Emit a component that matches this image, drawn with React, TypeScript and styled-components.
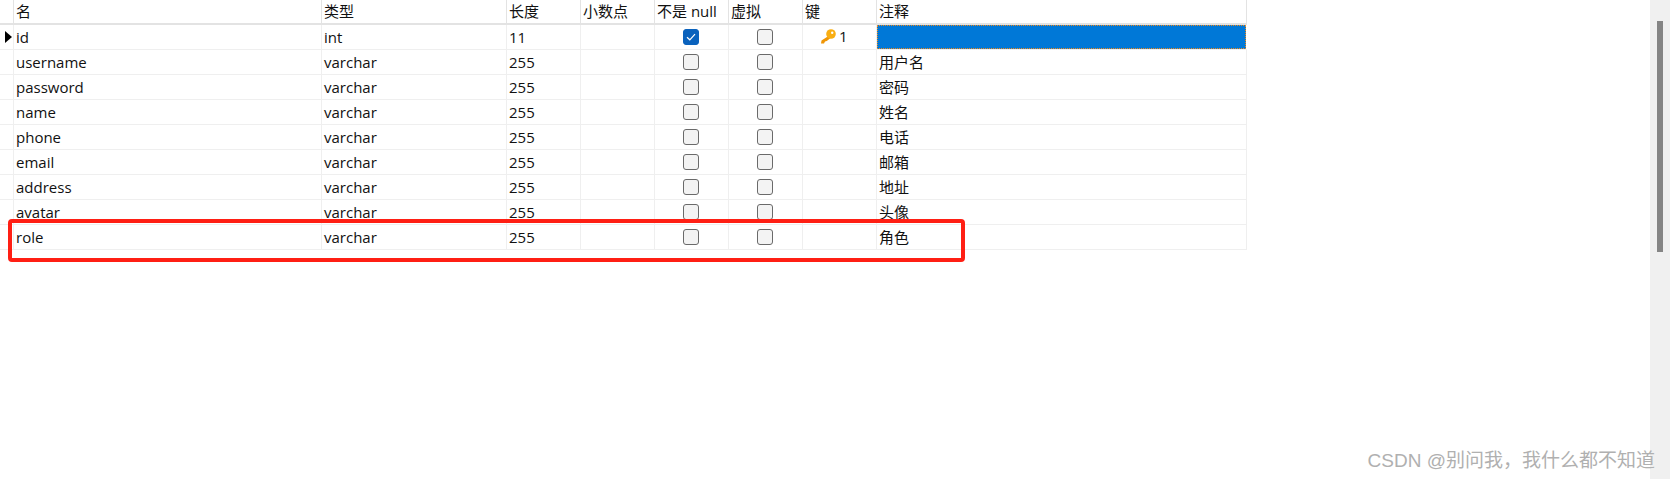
import React from 'react';
import styled, { createGlobalStyle } from 'styled-components';

const GlobalStyle = createGlobalStyle`
  html, body {
    margin: 0;
    padding: 0;
    height: 479px;
    overflow: hidden;
    background: #fff;
  }
`;

const Page = styled.div`
  position: relative;
  display: flex;
  width: 1670px;
  height: 479px;
  font-family: "Open Sans", "Noto Sans CJK SC", sans-serif;
  font-size: 15px;
  color: #111;
`;
const TableArea = styled.div`
  flex: 1;
`;
const Table = styled.div`
  width: 1247px;
`;
const Row = styled.div<{ $header?: boolean }>`
  display: grid;
  grid-template-columns: 14px 308px 185px 74px 74px 74px 74px 74px 370px;
  height: 25px;
  box-sizing: border-box;
  border-bottom: ${(p) => (p.$header ? '2px solid #e3e3e3' : '1px solid #efefef')};
`;
const Cell = styled.div`
  display: flex;
  align-items: center;
  box-sizing: border-box;
  padding: 0 0 0 2px;
  border-right: 1px solid #efefef;
  white-space: nowrap;
  line-height: 1;
`;
const HeadCell = styled(Cell)`
  border-right-color: #e3e3e3;
`;
const CheckCell = styled(Cell)`
  justify-content: center;
  padding: 0 2px 0 0;
`;
const KeyCell = styled(Cell)`
  padding: 0 0 1px 17px;
  gap: 3px;
`;
const IndicatorCell = styled(Cell)`
  padding: 0 0 0 5px;
`;
const Arrow = styled.span`
  width: 0;
  height: 0;
  border-top: 6px solid transparent;
  border-bottom: 6px solid transparent;
  border-left: 7px solid #000;
`;
const Box = styled.span<{ $checked?: boolean }>`
  display: flex;
  align-items: center;
  justify-content: center;
  width: 16px;
  height: 16px;
  box-sizing: border-box;
  border-radius: 3px;
  border: 1px solid ${(p) => (p.$checked ? '#0a62bd' : '#6a6a6a')};
  background: ${(p) => (p.$checked ? '#0a62bd' : '#f3f3f3')};
`;
const SelectedCell = styled.div`
  box-sizing: border-box;
  margin-right: 1px;
  background: #0078d7;
  border: 1px dotted #f08a1d;
`;
const Track = styled.div`
  width: 20px;
  box-sizing: border-box;
  padding: 21px 7px 0;
  background: #f0f0f0;
`;
const Thumb = styled.div`
  width: 6px;
  height: 231px;
  background: #858585;
`;
const Highlight = styled.div`
  position: absolute;
  left: 8px;
  top: 219px;
  width: 957px;
  height: 43px;
  box-sizing: border-box;
  border: 4px solid #ff1f14;
  border-radius: 4px;
`;
const Watermark = styled.div`
  position: absolute;
  right: 15px;
  top: 449px;
  font-family: "Liberation Sans", "Noto Sans CJK SC", sans-serif;
  font-size: 19px;
  line-height: 24px;
  color: #b0b0b0;
  white-space: nowrap;
`;

const fields = [
  ['id', 'int', '11', ''],
  ['username', 'varchar', '255', '用户名'],
  ['password', 'varchar', '255', '密码'],
  ['name', 'varchar', '255', '姓名'],
  ['phone', 'varchar', '255', '电话'],
  ['email', 'varchar', '255', '邮箱'],
  ['address', 'varchar', '255', '地址'],
  ['avatar', 'varchar', '255', '头像'],
  ['role', 'varchar', '255', '角色'],
];

const heads = ['名', '类型', '长度', '小数点', '不是 null', '虚拟', '键', '注释'];

function KeyIcon() {
  return (
    <svg width="16" height="15" viewBox="0 0 16 15">
      <path d="M8.5 7 L1.5 11.5 L1 14.5 L4 14.5 L5 12.5 L6.8 12 L10.5 9 Z" fill="#ef9606" />
      <circle cx="11" cy="5" r="4.8" fill="#f9ae12" />
      <circle cx="12.2" cy="3.8" r="1.2" fill="#fff" />
    </svg>
  );
}

export default function App() {
  return (
    <Page>
      <GlobalStyle />
      <TableArea>
        <Table>
          <Row $header>
            <HeadCell />
            {heads.map((h) => (
              <HeadCell key={h}>{h}</HeadCell>
            ))}
          </Row>
          {fields.map(([name, type, len, comment], i) => (
            <Row key={name}>
              <IndicatorCell>{i === 0 && <Arrow />}</IndicatorCell>
              <Cell>{name}</Cell>
              <Cell>{type}</Cell>
              <Cell>{len}</Cell>
              <Cell />
              <CheckCell>
                <Box $checked={i === 0}>
                  {i === 0 && (
                    <svg width="10" height="8" viewBox="0 0 10 8">
                      <path d="M1 4.2 L3.8 6.8 L9 1.2" fill="none" stroke="#fff" strokeWidth="1.2" />
                    </svg>
                  )}
                </Box>
              </CheckCell>
              <CheckCell>
                <Box />
              </CheckCell>
              {i === 0 ? (
                <KeyCell>
                  <KeyIcon />1
                </KeyCell>
              ) : (
                <Cell />
              )}
              {i === 0 ? <SelectedCell /> : <Cell>{comment}</Cell>}
            </Row>
          ))}
        </Table>
      </TableArea>
      <Track>
        <Thumb />
      </Track>
      <Highlight />
      <Watermark>CSDN @别问我，我什么都不知道</Watermark>
    </Page>
  );
}
